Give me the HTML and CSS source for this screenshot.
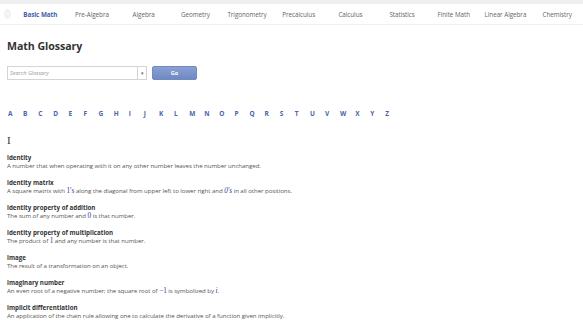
FILE: index.html
```html
<!DOCTYPE html>
<html>
<head>
<meta charset="utf-8">
<link rel="stylesheet" href="styles.css">
</head>
<body>
<div class="topstrip"></div>
<nav class="nav">
  <div class="back">«</div>
  <div class="navitems">
    <a class="navitem active">Basic Math</a>
    <a class="navitem">Pre-Algebra</a>
    <a class="navitem">Algebra</a>
    <a class="navitem">Geometry</a>
    <a class="navitem">Trigonometry</a>
    <a class="navitem">Precalculus</a>
    <a class="navitem">Calculus</a>
    <a class="navitem">Statistics</a>
    <a class="navitem">Finite Math</a>
    <a class="navitem">Linear Algebra</a>
    <a class="navitem">Chemistry</a>
  </div>
</nav>
<main class="main">
  <h1 class="title">Math Glossary</h1>
  <div class="search">
    <div class="combo">
      <span class="placeholder">Search Glossary</span>
      <span class="arrow">▾</span>
    </div>
    <button class="go">Go</button>
  </div>
  <div class="letters">
    <a>A</a><a>B</a><a>C</a><a>D</a><a>E</a><a>F</a><a>G</a><a>H</a><a>I</a><a>J</a><a>K</a><a>L</a><a>M</a><a>N</a><a>O</a><a>P</a><a>Q</a><a>R</a><a>S</a><a>T</a><a>U</a><a>V</a><a>W</a><a>X</a><a>Y</a><a>Z</a>
  </div>
  <h2 class="letterhead">I</h2>
  <dl class="entries">
    <div class="entry"><dt>identity</dt><dd>A number that when operating with it on any other number leaves the number unchanged.</dd></div>
    <div class="entry"><dt>identity matrix</dt><dd>A square matrix with <span class="m">1′s</span> along the diagonal from upper left to lower right and <span class="m mi">0′s</span> in all other positions.</dd></div>
    <div class="entry"><dt>identity property of addition</dt><dd>The sum of any number and <span class="m">0</span> is that number.</dd></div>
    <div class="entry"><dt>identity property of multiplication</dt><dd>The product of <span class="m">1</span> and any number is that number.</dd></div>
    <div class="entry"><dt>image</dt><dd>The result of a transformation on an object.</dd></div>
    <div class="entry"><dt>imaginary number</dt><dd>An even root of a negative number; the square root of <span class="m">−1</span> is symbolized by <span class="m mi">i</span>.</dd></div>
    <div class="entry"><dt>implicit differentiation</dt><dd>An application of the chain rule allowing one to calculate the derivative of a function given implicitly.</dd></div>
  </dl>
</main>
</body>
</html>
```
FILE: styles.css
```css
html, body { margin: 0; padding: 0; background: #fff; }
body { font-family: "Open Sans", "Noto Sans", sans-serif; color: #333; }
.topstrip { height: 4px; background: #eeeeee; }
.nav { height: 20px; display: flex; align-items: center; border-bottom: 1px solid #f0f0f0; }
.back { width: 10px; height: 10px; border-radius: 50%; background: #f1f1f1; color: #fff; font-size: 7px; line-height: 9px; text-align: center; margin-left: 4px; margin-right: 3px; }
.navitems { display: grid; grid-template-columns: repeat(11, 51.7px); }
.navitem { font-size: 6.3px; color: #666; text-align: center; white-space: nowrap; letter-spacing: -0.05px; }
.navitem.active { color: #3f5ea9; font-weight: 700; }
.main { padding: 0 7px; }
.title { font-size: 10.6px; font-weight: 700; margin: 13px 0 0; line-height: 16px; color: #333; letter-spacing: -0.05px; }
.search { display: flex; align-items: center; gap: 5px; margin-top: 12px; }
.combo { width: 138px; height: 12px; border: 1px solid #d4d4d4; display: flex; align-items: center; justify-content: space-between; }
.placeholder { font-size: 5.5px; font-style: italic; color: #999; padding-left: 2px; }
.arrow { width: 8px; height: 12px; border-left: 1px solid #d4d4d4; font-size: 5px; line-height: 12px; text-align: center; color: #666; }
.go { width: 45px; height: 14px; border: 1px solid #7089c2; border-radius: 2px; background: linear-gradient(#8aa0d2, #7189c4); color: #fff; font-family: inherit; font-size: 5.5px; font-weight: 700; padding: 0; }
.letters { display: flex; margin-top: 29px; padding-left: 1px; }
.letters a { width: 15.1px; font-size: 6.5px; font-weight: 700; color: #4964ab; line-height: 10px; }
.letterhead { font-family: "Liberation Serif", serif; font-weight: 400; font-size: 11px; margin: 15px 0 0; line-height: 12px; color: #333; }
.entries { margin: 8px 0 0; }
.entry { height: 25px; }
dt { font-size: 6.2px; font-weight: 700; color: #333; line-height: 8px; }
dd { margin: 0; font-size: 6.1px; color: #555; line-height: 8px; letter-spacing: -0.05px; }
.m { font-family: "Liberation Serif", serif; font-size: 7.3px; color: #2e3d9a; }
.mi { font-style: italic; }
```
